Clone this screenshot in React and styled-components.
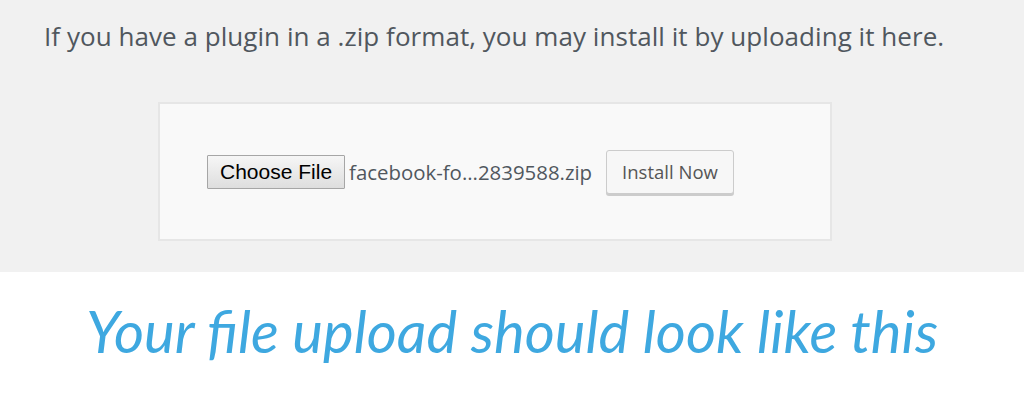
import React from 'react'
import styled, { createGlobalStyle } from 'styled-components'

const GlobalStyle = createGlobalStyle`
  body {
    margin: 0;
    background: #ffffff;
  }
`

const Page = styled.div`
  width: 1024px;
  height: 409px;
  overflow: hidden;
  display: flex;
  flex-direction: column;
`

const AdminArea = styled.section`
  background: #f1f1f1;
  height: 272px;
  padding: 18px 0 0 44px;
  box-sizing: border-box;
`

const Intro = styled.p`
  margin: 0;
  font-family: "Open Sans", "Noto Sans", sans-serif;
  font-size: 26px;
  letter-spacing: 0.05px;
  line-height: 36px;
  color: #50575e;
`

const UploadCard = styled.div`
  margin: 48px 0 0 114px;
  width: 674px;
  height: 139px;
  box-sizing: border-box;
  background: #f9f9f9;
  border: 2px solid #e6e6e6;
  display: flex;
  align-items: center;
  padding: 0 0 0 47px;
`

const FileButton = styled.button`
  height: 34px;
  padding: 0 12px;
  font-family: "Liberation Sans", Arial, sans-serif;
  font-size: 21px;
  color: #000;
  background: linear-gradient(#f6f6f6, #dedede);
  border: 1px solid #a6a6a6;
  border-radius: 1px;
`

const FileName = styled.span`
  margin-left: 4px;
  font-family: "Open Sans", "Noto Sans", sans-serif;
  font-size: 20.4px;
  color: #50575e;
`

const InstallButton = styled.button`
  margin-left: 14px;
  height: 44px;
  padding: 0 15px;
  font-family: "Open Sans", "Noto Sans", sans-serif;
  font-size: 18.5px;
  color: #555;
  background: #f7f7f7;
  border: 1px solid #cccccc;
  border-radius: 3px;
  box-shadow: 0 2px 0 #cccccc;
`

const Caption = styled.h2`
  margin: 0;
  flex: 1;
  display: flex;
  align-items: center;
  justify-content: center;
  padding-bottom: 20px;
  font-family: Lato, "Open Sans", sans-serif;
  font-style: italic;
  font-weight: 400;
  font-size: 58px;
  color: #3ea8e0;
`

export default function App() {
  return (
    <>
      <GlobalStyle />
      <Page>
        <AdminArea>
          <Intro>If you have a plugin in a .zip format, you may install it by uploading it here.</Intro>
          <UploadCard>
            <FileButton type="button">Choose File</FileButton>
            <FileName>facebook-fo...2839588.zip</FileName>
            <InstallButton type="button">Install Now</InstallButton>
          </UploadCard>
        </AdminArea>
        <Caption>Your file upload should look like this</Caption>
      </Page>
    </>
  )
}
